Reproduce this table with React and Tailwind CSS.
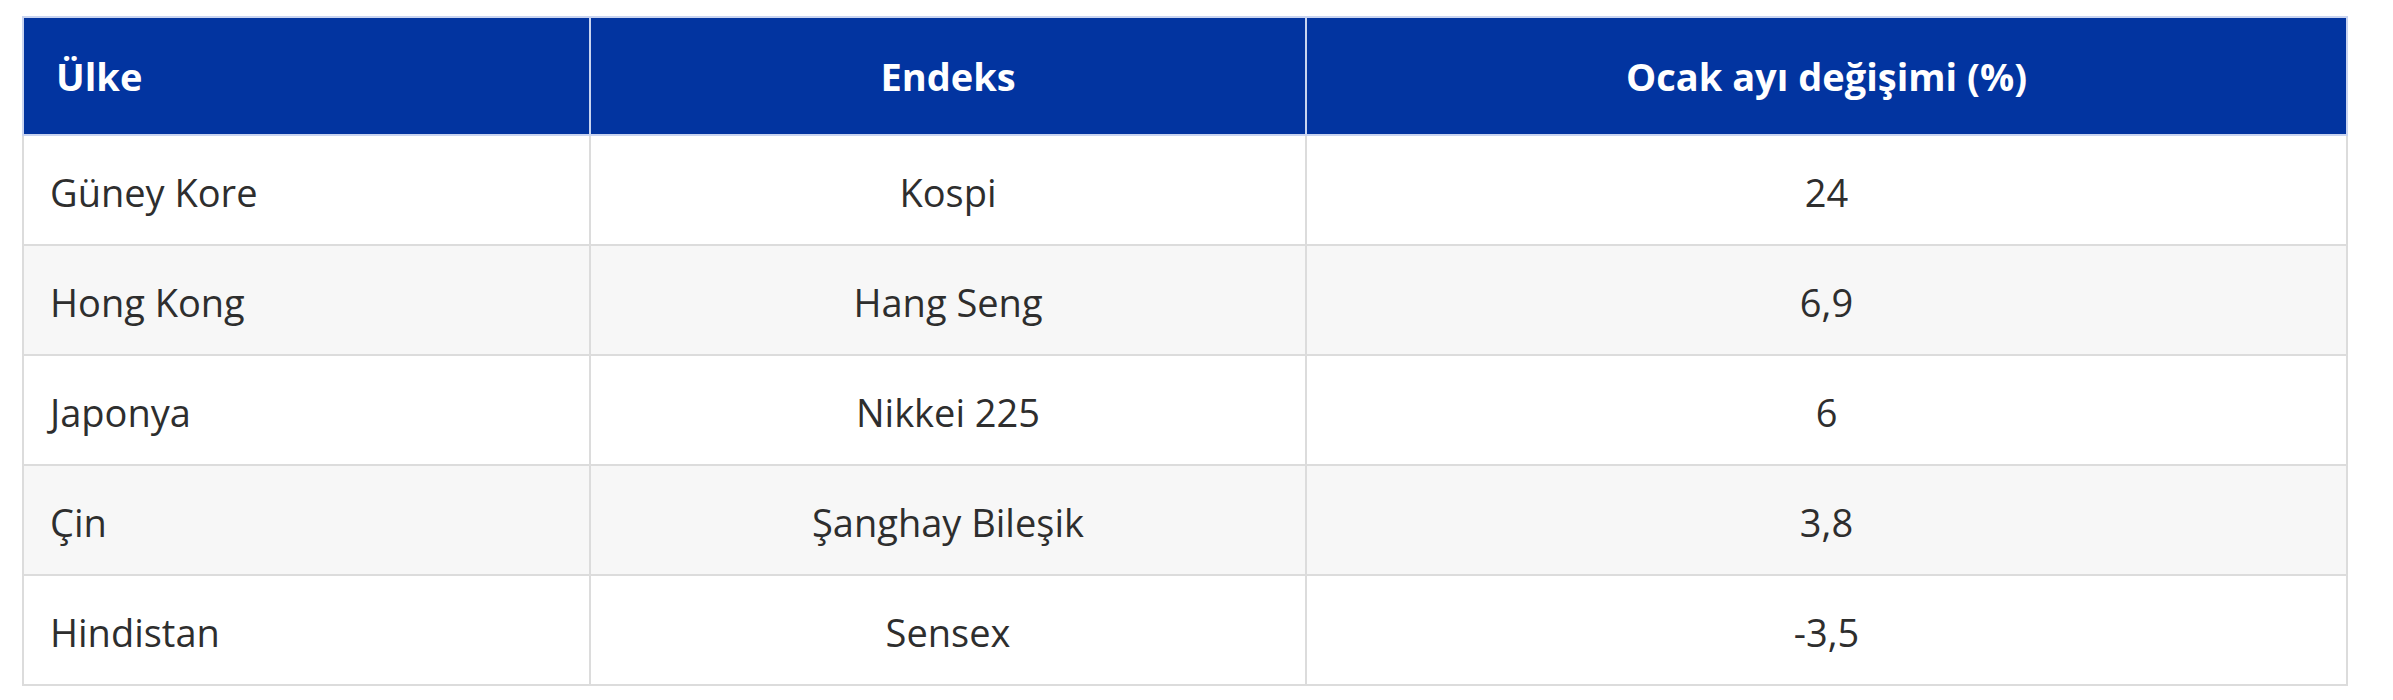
export default function App() {
  const rows = [
    ["Güney Kore", "Kospi", "24"],
    ["Hong Kong", "Hang Seng", "6,9"],
    ["Japonya", "Nikkei 225", "6"],
    ["Çin", "Şanghay Bileşik", "3,8"],
    ["Hindistan", "Sensex", "-3,5"],
  ];
  return (
    <div className="bg-white w-[2393px] h-[700px] pt-[16px] pl-[22px]">
      <table className="w-[2324px] table-fixed border-collapse font-['Open_Sans',sans-serif] text-[38px] leading-none">
        <colgroup>
          <col className="w-[567px]" />
          <col className="w-[716px]" />
          <col className="w-[1041px]" />
        </colgroup>
        <thead>
          <tr className="h-[118px] bg-[#0234a0] text-white font-bold">
            <th className="border-2 border-[#c9d4f0] text-left pl-[32px] font-bold">Ülke</th>
            <th className="border-2 border-[#c9d4f0] text-center font-bold">Endeks</th>
            <th className="border-2 border-[#c9d4f0] text-center font-bold">Ocak ayı değişimi (%)</th>
          </tr>
        </thead>
        <tbody>
          {rows.map((r, i) => (
            <tr key={i} className={i % 2 === 1 ? "h-[110px] bg-[#f7f7f7] text-[#2e2e2e]" : "h-[110px] bg-white text-[#2e2e2e]"}>
              <td className="border-2 border-[#dcdcdc] text-left pl-[26px] pt-[4px]">{r[0]}</td>
              <td className="border-2 border-[#dcdcdc] text-center pt-[4px]">{r[1]}</td>
              <td className="border-2 border-[#dcdcdc] text-center pt-[4px]">{r[2]}</td>
            </tr>
          ))}
        </tbody>
      </table>
    </div>
  );
}
